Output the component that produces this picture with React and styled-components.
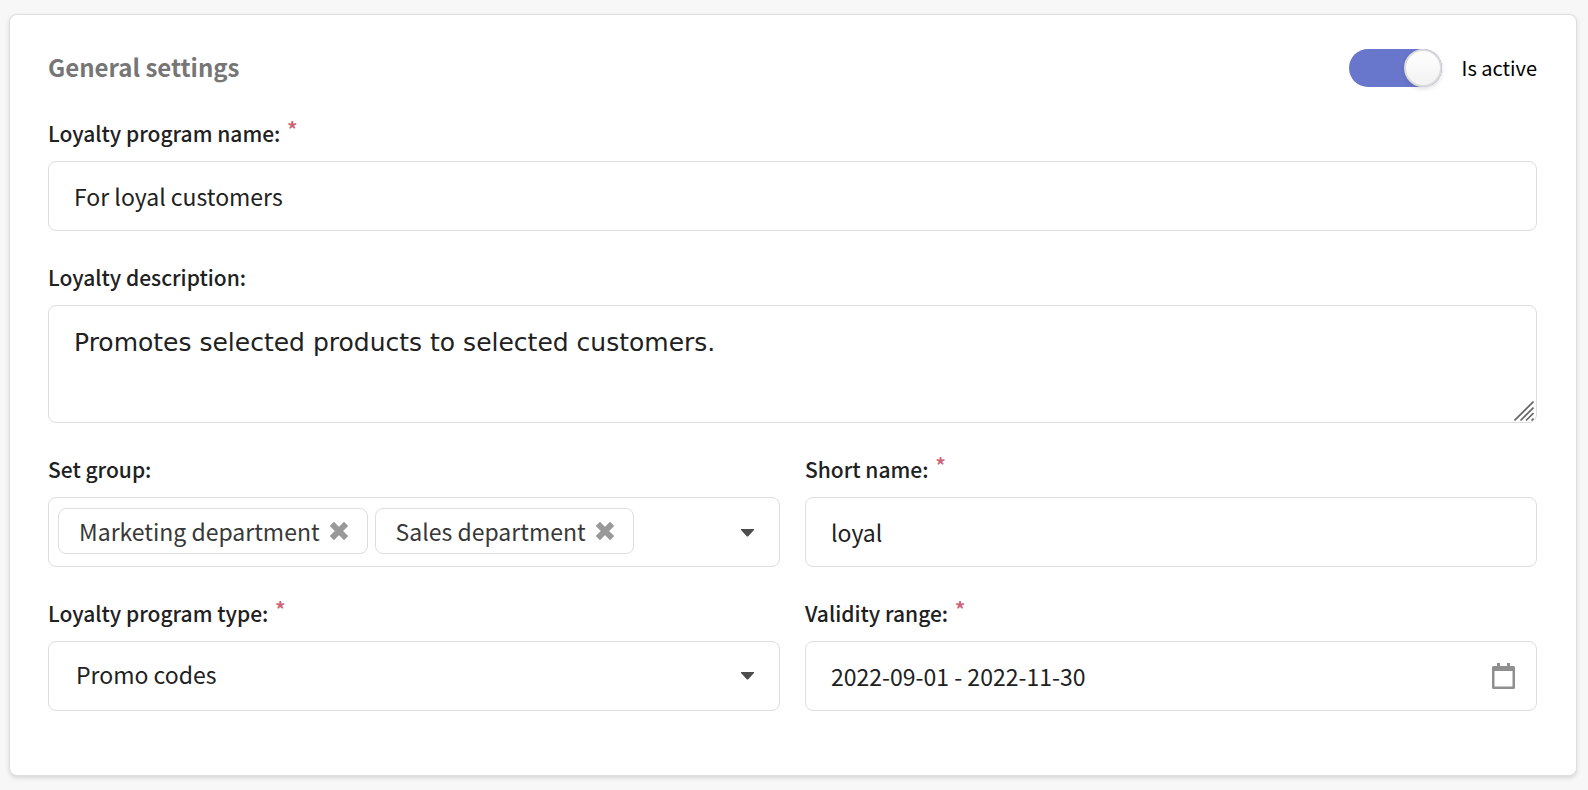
import React, { useState } from 'react';
import styled, { createGlobalStyle } from 'styled-components';

const GlobalStyle = createGlobalStyle`
  *, *::before, *::after {
    box-sizing: border-box;
  }

  body {
    margin: 0;
    background: #f7f7f7;
    color: #212121;
    font-family: 'Noto Sans CJK SC', 'Noto Sans', sans-serif;
    font-size: 23px;
    line-height: 32px;
  }

  input, select, textarea, button {
    font: inherit;
    color: inherit;
  }
`;

const Page = styled.main`
  padding: 14px 11px 14px 9px;
`;

const Card = styled.form`
  display: flex;
  flex-direction: column;
  gap: 30px;
  padding: 34px 39px 64px 38px;
  background: #fff;
  border: 1px solid #dededf;
  border-radius: 8px;
  box-shadow: 0 2px 4px rgba(34, 36, 38, 0.15);
`;

const Header = styled.header`
  display: flex;
  align-items: center;
  justify-content: space-between;
  height: 38px;
`;

const Title = styled.h1`
  margin: 0;
  padding-bottom: 2px;
  color: #767676;
  font-size: 24px;
  font-weight: 700;
`;

const ToggleLabel = styled.label`
  display: flex;
  align-items: center;
  gap: 20px;
  color: #000;
  font-size: 20px;
`;

const Toggle = styled.input`
  appearance: none;
  display: flex;
  width: 93px;
  height: 38px;
  margin: 0;
  border-radius: 19px;
  background: #e0e0e0;
  cursor: pointer;

  &::before {
    content: '';
    width: 38px;
    height: 38px;
    border: 2px solid #dadada;
    border-radius: 50%;
    background: linear-gradient(#fff, #f2f2f2);
    box-shadow: 0 2px 4px rgba(34, 36, 38, 0.15);
  }

  &:checked {
    justify-content: flex-end;
    background: #6877cc;
  }
`;

const Row = styled.div`
  display: grid;
  grid-template-columns: 1fr 1fr;
  gap: 25px;
`;

const Field = styled.div`
  display: flex;
  flex-direction: column;
  gap: 12px;
  min-width: 0;
`;

const Label = styled.label`
  display: flex;
  gap: 7px;
  font-size: 21px;
  font-weight: 500;
`;

const Required = styled.span`
  color: #cd6478;
  font-size: 20px;
  font-weight: 700;
  line-height: 24px;
`;

// Stacks an icon over the end of the control it belongs to
const Control = styled.div`
  display: grid;
  align-items: ${({ $align }) => $align || 'center'};

  > * {
    grid-area: 1 / 1;
  }

  > svg {
    justify-self: end;
    pointer-events: none;
  }
`;

const TextInput = styled.input`
  width: 100%;
  height: 70px;
  padding: 0 25px;
  border: 1px solid #dededf;
  border-radius: 8px;
  background: #fff;
  outline: none;
`;

const TextArea = styled.textarea`
  display: block;
  width: 100%;
  height: 118px;
  padding: 21px 25px;
  border: 1px solid #dededf;
  border-radius: 8px;
  background: #fff;
  font-family: 'DejaVu Sans', sans-serif;
  font-size: 25px;
  outline: none;
  resize: vertical;

  &::-webkit-resizer {
    background: transparent;
  }
`;

const Select = styled.select`
  appearance: none;
  width: 100%;
  height: 70px;
  padding: 0 60px 4px 27px;
  border: 1px solid #dededf;
  border-radius: 8px;
  background: #fff;
  outline: none;
`;

const TagBox = styled.div`
  display: flex;
  align-items: center;
  gap: 7px;
  height: 70px;
  padding: 0 9px 2px;
  border: 1px solid #dededf;
  border-radius: 8px;
`;

const Tag = styled.span`
  display: flex;
  align-items: center;
  gap: 10px;
  height: 46px;
  padding: 0 19px 0 20px;
  border: 1px solid #dededf;
  border-radius: 8px;
  color: #383838;
  white-space: nowrap;
`;

const IconButton = styled.button`
  display: flex;
  padding: 0;
  border: 0;
  background: none;
  cursor: pointer;
`;

const OpenButton = styled(IconButton)`
  margin-left: auto;
  padding: 4px 16px 0;
`;

const Caret = styled.svg`
  width: 13px;
  height: 8px;
  fill: #4d4d4d;

  ${Select} + & {
    margin-right: 26px;
  }
`;

const CalendarIcon = styled.svg`
  width: 23px;
  height: 26px;
  margin-right: 22px;
  fill: #8f8f8f;
`;

const Grip = styled.svg`
  width: 20px;
  height: 20px;
  margin: 0 3px 2px 0;
  stroke: #666;
  stroke-width: 1.6;
`;

const CaretDown = () => (
  <Caret viewBox="0 0 13 8" aria-hidden="true">
    <path d="M0 0h13v1L7.3 7.2q-.8.7-1.6 0L0 1z" />
  </Caret>
);

const RemoveIcon = () => (
  <svg width="18" height="18" viewBox="0 0 18 18" aria-hidden="true">
    <path d="M4 4l10 10M14 4L4 14" stroke="#999" strokeWidth="6" strokeLinecap="square" strokeLinejoin="round" />
  </svg>
);

const FieldLabel = ({ htmlFor, id, required, children }) => (
  <Label htmlFor={htmlFor} id={id} as={htmlFor ? 'label' : 'span'}>
    {children}
    {required && <Required>*</Required>}
  </Label>
);

const App = () => {
  const [active, setActive] = useState(true);
  const [groups, setGroups] = useState(['Marketing department', 'Sales department']);

  const removeGroup = (name) => {
    setGroups(groups.filter((group) => group !== name));
  };

  return (
    <>
      <GlobalStyle />
      <Page>
        <Card>
          <Header>
            <Title>General settings</Title>
            <ToggleLabel>
              <Toggle
                type="checkbox"
                role="switch"
                checked={active}
                onChange={(e) => setActive(e.target.checked)}
              />
              Is active
            </ToggleLabel>
          </Header>

          <Field>
            <FieldLabel htmlFor="name" required>Loyalty program name:</FieldLabel>
            <TextInput id="name" type="text" defaultValue="For loyal customers" />
          </Field>

          <Field>
            <FieldLabel htmlFor="description">Loyalty description:</FieldLabel>
            <Control $align="end">
              <TextArea id="description" defaultValue="Promotes selected products to selected customers." />
              <Grip viewBox="0 0 20 20" aria-hidden="true">
                <path d="M0.5 19.5l19-19M6.5 19.5l13-13M12 19.5l7.5-7.5M17.5 19.5l2-2" />
              </Grip>
            </Control>
          </Field>

          <Row>
            <Field>
              <FieldLabel id="group-label">Set group:</FieldLabel>
              <TagBox role="group" aria-labelledby="group-label">
                {groups.map((group) => (
                  <Tag key={group}>
                    {group}
                    <IconButton type="button" aria-label={`Remove ${group}`} onClick={() => removeGroup(group)}>
                      <RemoveIcon />
                    </IconButton>
                  </Tag>
                ))}
                <OpenButton type="button" aria-label="Open groups">
                  <CaretDown />
                </OpenButton>
              </TagBox>
            </Field>
            <Field>
              <FieldLabel htmlFor="short-name" required>Short name:</FieldLabel>
              <TextInput id="short-name" type="text" defaultValue="loyal" />
            </Field>
          </Row>

          <Row>
            <Field>
              <FieldLabel htmlFor="type" required>Loyalty program type:</FieldLabel>
              <Control>
                <Select id="type" defaultValue="promo">
                  <option value="promo">Promo codes</option>
                </Select>
                <CaretDown />
              </Control>
            </Field>
            <Field>
              <FieldLabel htmlFor="range" required>Validity range:</FieldLabel>
              <Control>
                <TextInput id="range" type="text" defaultValue="2022-09-01 - 2022-11-30" />
                <CalendarIcon viewBox="0 0 23 26" aria-hidden="true">
                  <path
                    fillRule="evenodd"
                    d="M5 0h3v3h7V0h3v3h3.500q1.500 0 1.500 1.500v20q0 1.500-1.500 1.500h-20Q0 26 0 24.500v-20Q0 3 1.500 3H5zM2.500 8v15.500h18V8z"
                  />
                </CalendarIcon>
              </Control>
            </Field>
          </Row>
        </Card>
      </Page>
    </>
  );
};

export default App;
